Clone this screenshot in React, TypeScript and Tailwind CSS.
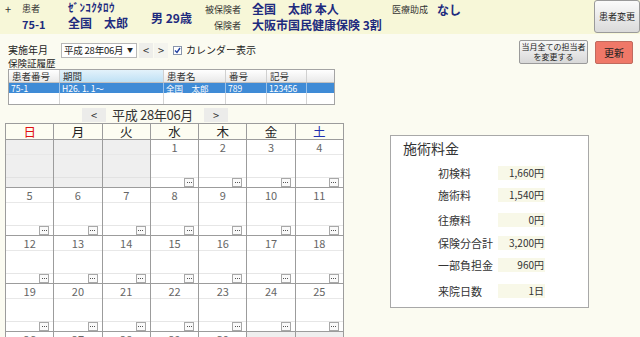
import React from "react";

const FONT = { fontFamily: '"Noto Sans CJK JP", "Noto Sans", sans-serif' };

function Dots() {
  return (
    <div className="w-[10px] h-[9px] border border-[#a8a8a8] bg-[#fafafa] flex items-center justify-center gap-[1px]">
      <span className="w-[1px] h-[1px] bg-[#555]" />
      <span className="w-[1px] h-[1px] bg-[#555]" />
      <span className="w-[1px] h-[1px] bg-[#555]" />
    </div>
  );
}

function DayCell({ n }: { n: number | null }) {
  const empty = n === null;
  return (
    <div
      className={`h-[48px] border-r border-b border-[#9c9c9c] flex flex-col ${
        empty ? "bg-[#efefef]" : "bg-white"
      }`}
    >
      <div className="h-[15px] flex items-center justify-center border-b border-[#e8e8e8] text-[11px] leading-[12px] text-[#666]">
        {n ?? ""}
      </div>
      <div className="flex-1" />
      <div className={`h-[10px] flex items-start border-t ${empty ? "border-[#e2e2e2]" : "border-[#e6e6e6]"}`}>
        <div className="flex-1" />
        {!empty && <Dots />}
        <div className="w-[4px]" />
      </div>
    </div>
  );
}

const weeks: (number | null)[][] = [
  [null, null, null, 1, 2, 3, 4],
  [5, 6, 7, 8, 9, 10, 11],
  [12, 13, 14, 15, 16, 17, 18],
  [19, 20, 21, 22, 23, 24, 25],
  [26, 27, 28, 29, 30, null, null],
];

const dayNames = [
  { t: "日", c: "text-[#e01010]" },
  { t: "月", c: "text-[#222]" },
  { t: "火", c: "text-[#222]" },
  { t: "水", c: "text-[#222]" },
  { t: "木", c: "text-[#222]" },
  { t: "金", c: "text-[#222]" },
  { t: "土", c: "text-[#2030b0]" },
];

const fees = [
  { l: "初検料", v: "1,660円", mt: "mt-[10px]" },
  { l: "施術料", v: "1,540円", mt: "mt-[8px]" },
  { l: "往療料", v: "0円", mt: "mt-[11px]" },
  { l: "保険分合計", v: "3,200円", mt: "mt-[9px]" },
  { l: "一部負担金", v: "960円", mt: "mt-[8px]" },
  { l: "来院日数", v: "1日", mt: "mt-[12px]" },
];

const cols = ["w-[51px]", "w-[104px]", "w-[62px]", "w-[41px]", "w-[40px]"];

export default function App() {
  return (
    <div className="w-[640px] h-[337px] overflow-hidden bg-[#fbfbf1] text-[#222]" style={FONT}>
      {/* Header */}
      <div className="flex h-[34px] bg-[#f7f7d8]">
        <div className="w-[22px] pl-[5px] pt-[2px] text-[11px] leading-[14px] text-[#333]">+</div>
        <div className="w-[46px] flex flex-col">
          <div className="mt-[4px] text-[9px] leading-[10px] text-[#333]">患者</div>
          <div className="mt-[4px] text-[11px] leading-[12px] font-bold text-[#1e2b7e]">75-1</div>
        </div>
        <div className="w-[83px] flex flex-col">
          <div className="mt-[1px] text-[11px] leading-[12px] font-bold text-[#1e2b7e] whitespace-nowrap tracking-[0.4px]">ｾﾞﾝｺｸﾀﾛｳ</div>
          <div className="mt-[3px] text-[12px] leading-[14px] font-bold text-[#1e2b7e] whitespace-nowrap">全国　太郎</div>
        </div>
        <div className="w-[50px] flex items-center pt-[1px] text-[12px] font-bold text-[#1e2b7e] whitespace-nowrap">男 29歳</div>
        <div className="w-[40px] flex flex-col items-end">
          <div className="mt-[5px] text-[9px] leading-[10px] text-[#333] whitespace-nowrap">被保険者</div>
          <div className="mt-[6px] text-[9px] leading-[10px] text-[#333] whitespace-nowrap">保険者</div>
        </div>
        <div className="w-[151px] pl-[11px] flex flex-col">
          <div className="mt-[2px] text-[12px] leading-[14px] font-bold text-[#1e2b7e] whitespace-nowrap">全国　太郎 本人</div>
          <div className="mt-[2px] text-[12px] leading-[14px] font-bold text-[#1e2b7e] whitespace-nowrap">大阪市国民健康保険 3割</div>
        </div>
        <div className="flex items-start pt-[4px] gap-[9px]">
          <span className="text-[9px] leading-[12px] text-[#333] whitespace-nowrap">医療助成</span>
          <span className="text-[12px] leading-[12px] font-bold text-[#1e2b7e]">なし</span>
        </div>
        <button className="ml-auto w-[46px] h-[33px] rounded-[3px] border border-[#9a9a9a] bg-gradient-to-b from-[#fbfbfb] to-[#dadada] text-[9px] text-[#222] whitespace-nowrap">
          患者変更
        </button>
      </div>

      {/* Body */}
      <div className="flex">
        {/* Left */}
        <div className="w-[345px] flex flex-col">
          <div className="mt-[8px] ml-[8px] flex items-center h-[16px]">
            <span className="w-[53px] text-[10px] leading-[12px] text-[#222] whitespace-nowrap">実施年月</span>
            <div className="w-[76px] h-[15px] bg-white border border-[#b8b8b8] flex items-center pl-[2px] text-[9.5px] leading-[12px] text-[#222] whitespace-nowrap overflow-hidden">
              <span className="flex-1 tracking-[-0.2px]">平成 28年06月</span>
              <span className="w-[9px] text-[6px] text-[#222]">▼</span>
            </div>
            <div className="ml-[2px] w-[14px] h-[15px] bg-[#eeeeea] text-[11px] leading-[14px] text-center text-[#333]">&lt;</div>
            <div className="ml-[1px] w-[14px] h-[15px] bg-[#f4f4ee] text-[11px] leading-[14px] text-center text-[#333]">&gt;</div>
            <div className="ml-[5px] w-[9px] h-[9px] bg-white border border-[#8a96ac] flex items-center justify-center">
              <svg width="7" height="7" viewBox="0 0 7 7">
                <path d="M1 3.5 L3 5.5 L6 1" stroke="#2040a0" strokeWidth="1.4" fill="none" />
              </svg>
            </div>
            <span className="ml-[4px] text-[10px] leading-[12px] text-[#222] whitespace-nowrap">カレンダー表示</span>
          </div>
          <div className="ml-[8px] h-[11px] text-[9.5px] leading-[10px] text-[#222] whitespace-nowrap">保険証履歴</div>
          {/* Table */}
          <div className="ml-[8px] w-[327px] border border-[#a4a4a4] bg-white">
            <div className="flex h-[13px] text-[9.5px] leading-[13px] text-[#333] border-b border-[#c0c0c0] overflow-hidden">
              <div className={`${cols[0]} pl-[3px] border-r border-[#d0d0d0] bg-gradient-to-b from-white to-[#e9e9e9] whitespace-nowrap overflow-hidden`}>患者番号</div>
              <div className={`${cols[1]} pl-[3px] border-r border-[#d0d0d0] bg-gradient-to-b from-[#e3f2fb] to-[#bfe1f5]`}>期間</div>
              <div className={`${cols[2]} pl-[3px] border-r border-[#d0d0d0] bg-gradient-to-b from-white to-[#e9e9e9]`}>患者名</div>
              <div className={`${cols[3]} pl-[3px] border-r border-[#d0d0d0] bg-gradient-to-b from-white to-[#e9e9e9]`}>番号</div>
              <div className={`${cols[4]} pl-[3px] border-r border-[#d0d0d0] bg-gradient-to-b from-white to-[#e9e9e9]`}>記号</div>
              <div className="flex-1 bg-gradient-to-b from-white to-[#e9e9e9]" />
            </div>
            <div className="flex h-[10px] text-[8.5px] leading-[10px] text-white bg-[#3f8bd6] overflow-hidden">
              <div className={`${cols[0]} pl-[2px] border-r border-[#9cc3ea] whitespace-nowrap`}>75-1</div>
              <div className={`${cols[1]} pl-[2px] border-r border-[#9cc3ea] whitespace-nowrap`}>H26. 1. 1～</div>
              <div className={`${cols[2]} pl-[2px] border-r border-[#9cc3ea] whitespace-nowrap`}>全国　太郎</div>
              <div className={`${cols[3]} pl-[2px] border-r border-[#9cc3ea] whitespace-nowrap`}>789</div>
              <div className={`${cols[4]} pl-[2px] border-r border-[#9cc3ea] whitespace-nowrap`}>123456</div>
              <div className="flex-1" />
            </div>
            <div className="flex h-[11px]">
              {cols.map((c) => (
                <div key={c} className={`${c} border-r border-[#d4d4d4]`} />
              ))}
              <div className="flex-1" />
            </div>
          </div>
          {/* Calendar nav */}
          <div className="mt-[2px] ml-[82px] flex items-center h-[16px]">
            <div className="w-[24px] h-[14px] bg-[#ececea] text-[11px] leading-[14px] text-center text-[#333]">&lt;</div>
            <div className="ml-[6px] w-[82px] text-[13px] leading-[16px] text-[#333] whitespace-nowrap tracking-[-0.3px]">平成 28年06月</div>
            <div className="ml-[10px] w-[24px] h-[14px] bg-[#ececea] text-[11px] leading-[14px] text-center text-[#333]">&gt;</div>
          </div>
          {/* Calendar grid */}
          <div className="ml-[5px] w-[339px] border-l border-t border-[#9c9c9c] grid grid-cols-7">
            {dayNames.map((d) => (
              <div
                key={d.t}
                className={`h-[16px] flex items-center justify-center border-r border-b border-[#9c9c9c] text-[12.5px] leading-[14px] bg-[#fdfdf2] ${d.c}`}
              >
                {d.t}
              </div>
            ))}
            {weeks.flat().map((n, i) => (
              <DayCell key={i} n={n} />
            ))}
          </div>
        </div>

        {/* Right */}
        <div className="flex-1 flex flex-col">
          <div className="mt-[6px] pr-[7px] flex justify-end items-start gap-[7px]">
            <button className="w-[69px] h-[24px] rounded-[2px] border border-[#9a9a9a] bg-gradient-to-b from-[#f8f8f8] to-[#d8d8d8] flex flex-col items-center justify-center text-[8px] leading-[10px] text-[#222] whitespace-nowrap">
              <span>当月全ての担当者</span>
              <span>を変更する</span>
            </button>
            <button className="mt-[1px] w-[38px] h-[23px] rounded-[2px] border border-[#c06a5e] bg-[#ef7868] text-[10px] text-[#222]">
              更新
            </button>
          </div>
          <div className="mt-[71px] ml-[45px] w-[199px] h-[173px] border border-[#a8a8a8] bg-white flex flex-col">
            <div className="mt-[4px] ml-[12px] text-[14px] leading-[16px] text-[#333]">施術料金</div>
            {fees.map((f) => (
              <div key={f.l} className={`${f.mt} flex items-center h-[14px]`}>
                <span className="ml-[47px] w-[60px] text-[11px] leading-[14px] text-[#333] whitespace-nowrap">{f.l}</span>
                <span className="w-[47px] h-[14px] bg-[#f8f8e8] text-right text-[10px] leading-[14px] text-[#333] pr-[1px]">
                  {f.v}
                </span>
              </div>
            ))}
          </div>
        </div>
      </div>
    </div>
  );
}
